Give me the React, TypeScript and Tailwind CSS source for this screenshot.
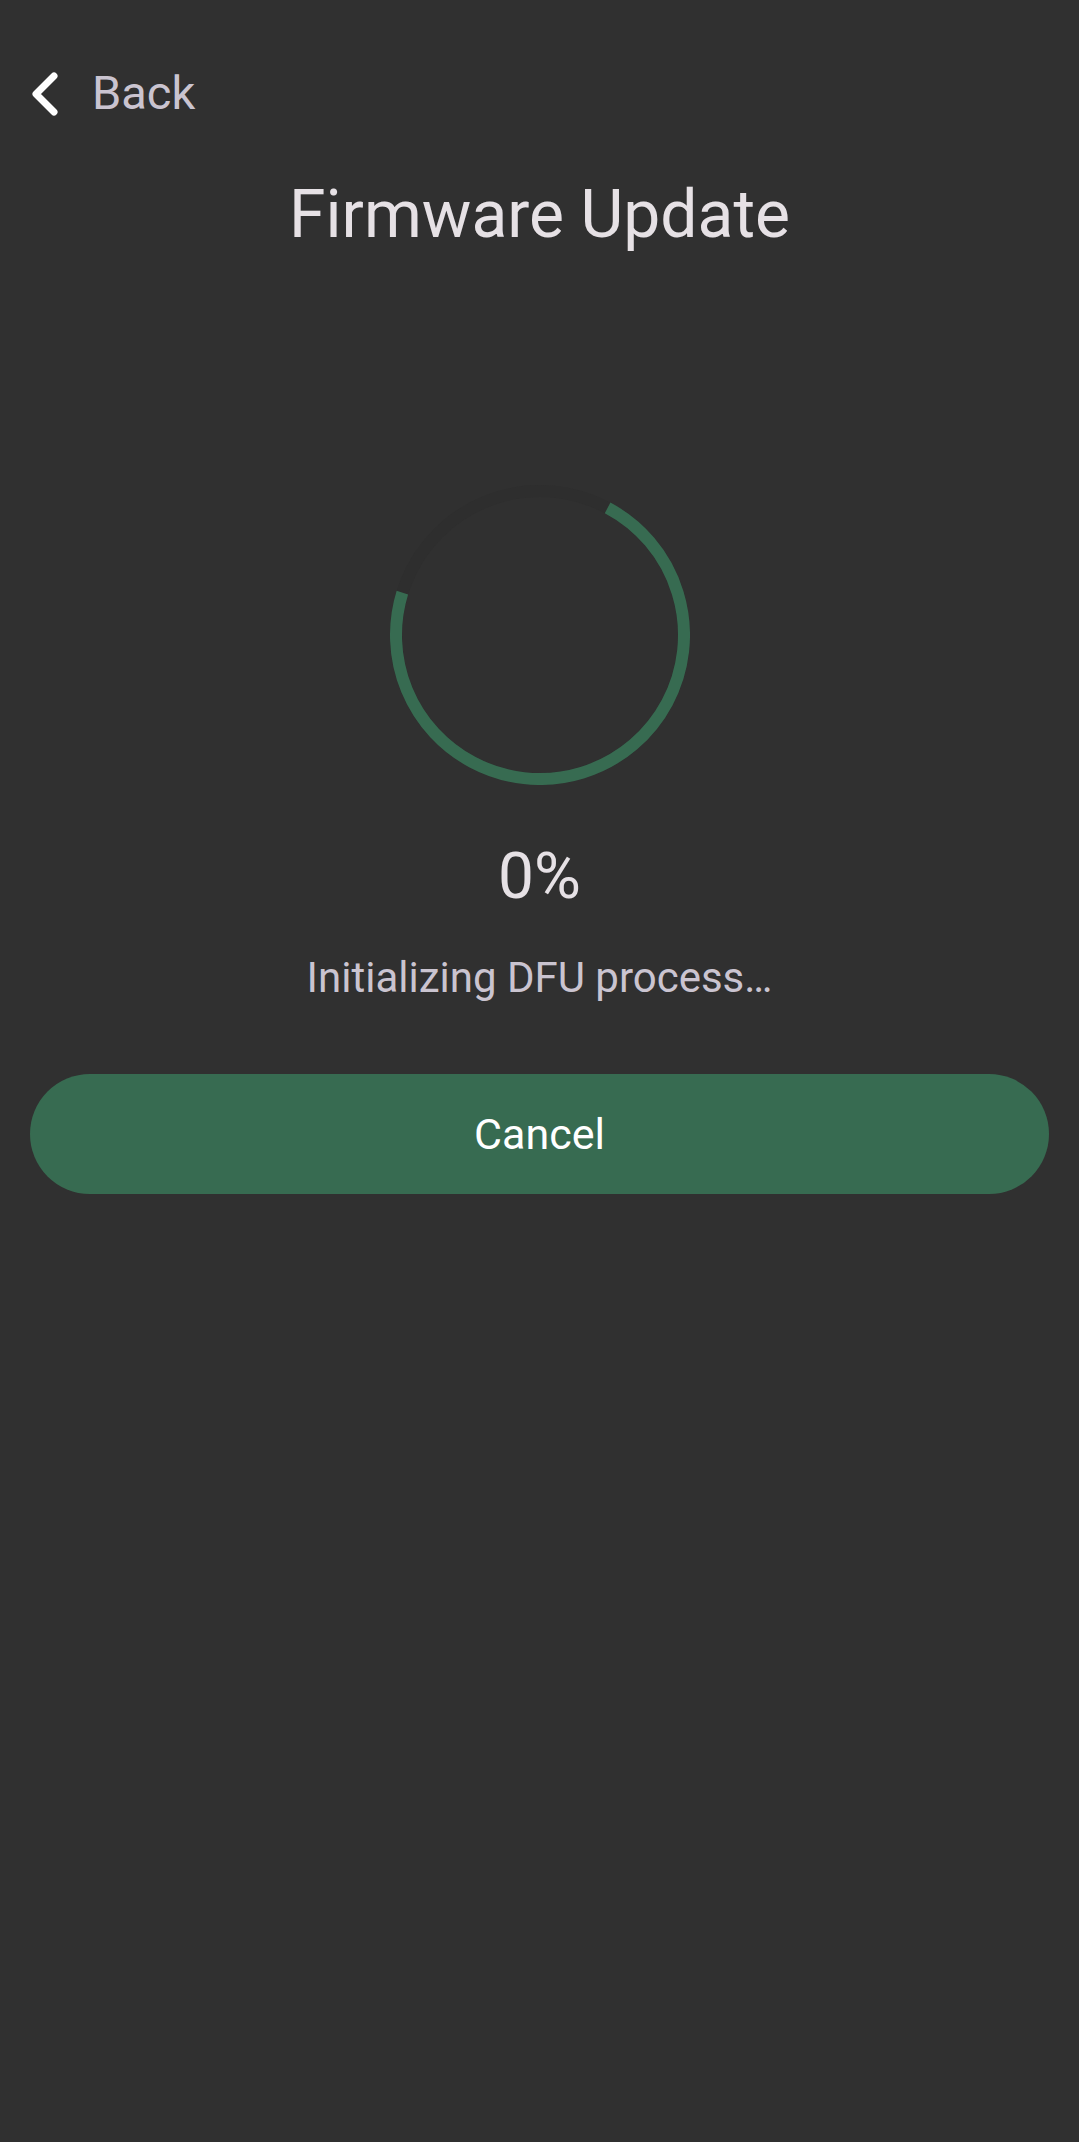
import React from "react";

export default function App() {
  const r = 144;
  const c = 2 * Math.PI * r;
  const arc = (259 / 360) * c;
  return (
    <div
      className="min-h-[2142px] w-full bg-[#303030] flex flex-col"
      style={{ fontFamily: "Roboto, 'Noto Sans', sans-serif" }}
    >
      {/* Header back row */}
      <div className="mt-[65px] h-[56px] flex items-center pl-[30px]">
        <svg width="28" height="44" viewBox="0 0 28 44" className="mt-[2px]">
          <polyline
            points="24,4 6,22 24,40"
            fill="none"
            stroke="#ffffff"
            strokeWidth="7"
            strokeLinecap="round"
            strokeLinejoin="round"
          />
        </svg>
        <span className="ml-[34px] text-[47px] leading-[56px] text-[#cac4d0]">Back</span>
      </div>

      {/* Title */}
      <h1 className="mt-[54px] text-center text-[66px] leading-[80px] text-[#e6e1e5] font-normal">
        Firmware Update
      </h1>

      {/* Spinner */}
      <div className="mt-[230px] flex justify-center">
        <svg width="300" height="300" viewBox="0 0 300 300">
          <circle cx="150" cy="150" r={r} fill="none" stroke="#2e2e2e" strokeWidth="12" />
          <circle
            cx="150"
            cy="150"
            r={r}
            fill="none"
            stroke="#376b51"
            strokeWidth="12"
            strokeDasharray={`${arc} ${c}`}
            transform="rotate(-62 150 150)"
          />
        </svg>
      </div>

      {/* Percentage */}
      <div className="mt-[54px] text-center text-[64px] leading-[75px] text-[#e6e1e5]">0%</div>

      {/* Status */}
      <div className="mt-[39px] text-center text-[42px] leading-[50px] text-[#cac4d0]">
        Initializing DFU process…
      </div>

      {/* Cancel button */}
      <button className="mt-[71px] mx-[30px] h-[120px] rounded-full bg-[#376b51] text-white text-[43px] flex items-center justify-center">
        Cancel
      </button>
    </div>
  );
}
